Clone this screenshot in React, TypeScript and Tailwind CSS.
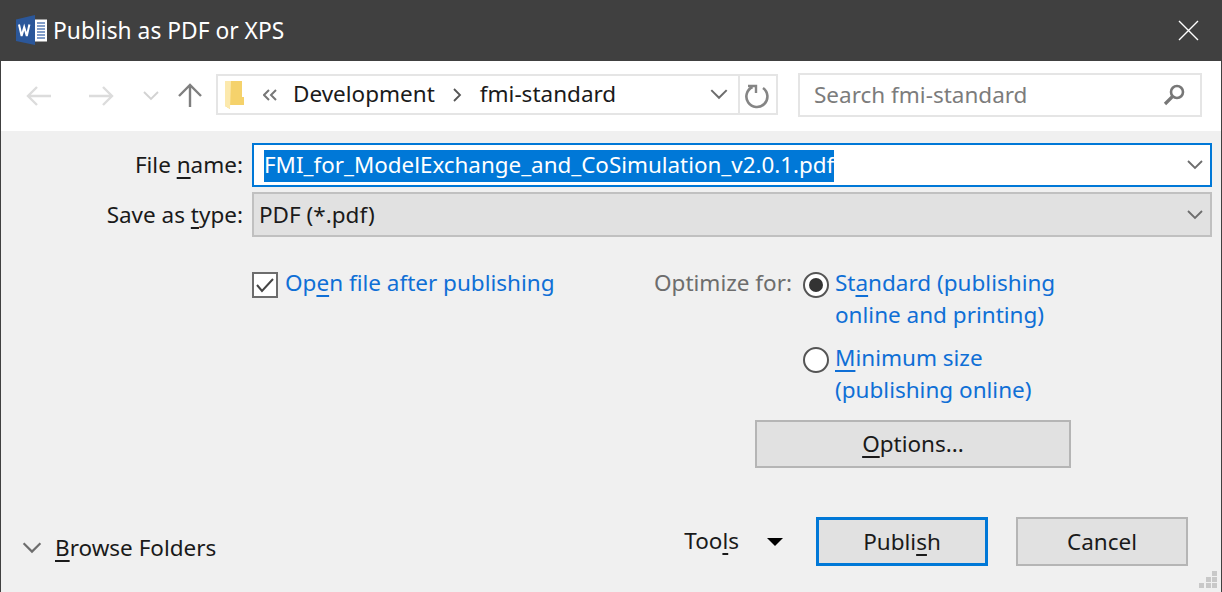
const font = { fontFamily: '"Noto Sans", sans-serif' };

const WordIcon = () => (
  <svg width="32" height="32" viewBox="0 0 32 32" className="shrink-0">
    <rect x="18" y="4.5" width="14" height="22" fill="#ffffff" />
    <path d="M22 8h8M22 11h8M22 14h8M22 17h8M22 20h8M22 23h8" stroke="#5b7fb8" strokeWidth="1.5" />
    <path d="M1 4.5 L20 0 V30 L1 26 Z" fill="#2b579a" />
    <path d="M4 9.5 L6.6 21 L9.2 12 L11.8 21 L14.4 9.5" fill="none" stroke="#ffffff" strokeWidth="2" />
  </svg>
);

const FolderIcon = () => (
  <svg width="20" height="28" viewBox="0 0 20 28">
    <path d="M0 0 H17 V16 H19 V24 H5 V28 L0 25 Z" fill="#f5d26b" />
    <path d="M0 0 H6 L5 28 L0 25 Z" fill="#fce9ad" />
  </svg>
);

const Arrow = ({ dir, color }: { dir: "left" | "right" | "up"; color: string }) => {
  const d =
    dir === "left"
      ? "M25 13H2M11 4l-9 9 9 9"
      : dir === "right"
        ? "M1 13h23M15 4l9 9-9 9"
        : "M13 24V2M2 13L13 2l11 11";
  return (
    <svg width="26" height="26" viewBox="0 0 26 26" fill="none" stroke={color} strokeWidth="2.4">
      <path d={d} />
    </svg>
  );
};

const Chevron = ({ className }: { className?: string }) => (
  <svg viewBox="0 0 16 10" fill="none" stroke="#6d6d6d" strokeWidth="1.8" className={className}>
    <path d="M1 1l7 7 7-7" />
  </svg>
);

export default function App() {
  return (
    <div
      className="w-[1222px] h-[592px] flex flex-col overflow-hidden bg-[#f0f0f0] text-[22.5px] text-[#1a1a1a] border-x border-[#404040]"
      style={font}
    >
      {/* title bar */}
      <div className="h-[61px] shrink-0 bg-[#404040] flex items-center pl-[14px] pr-[22px] text-white">
        <WordIcon />
        <span className="ml-[6px] mt-[2px] flex-1 leading-none text-[22.8px]">Publish as PDF or XPS</span>
        <svg width="21" height="21" viewBox="0 0 21 21" stroke="#ffffff" strokeWidth="1.4">
          <path d="M1 1l19 19M20 1L1 20" />
        </svg>
      </div>

      {/* nav toolbar */}
      <div className="h-[70px] shrink-0 bg-white flex items-center pl-[25px]">
        <Arrow dir="left" color="#dcdcdc" />
        <div className="w-[36px]" />
        <Arrow dir="right" color="#dcdcdc" />
        <Chevron className="ml-[29px] w-[16px] h-[10px] opacity-30" />
        <div className="ml-[18px]">
          <Arrow dir="up" color="#7f7f7f" />
        </div>
        <div className="ml-[13px] mb-[3px] w-[562px] h-[41px] border-2 border-[#e5e5e5] flex items-center bg-white">
          <div className="ml-[7px] flex items-center">
            <FolderIcon />
          </div>
          <svg width="14" height="12" viewBox="0 0 14 12" fill="none" stroke="#777" strokeWidth="2" className="ml-[18px] shrink-0">
            <path d="M6 1L1 6l5 5M13 1L8 6l5 5" />
          </svg>
          <span className="ml-[16px] mb-[2px]">Development</span>
          <svg width="10" height="16" viewBox="0 0 10 16" fill="none" stroke="#555" strokeWidth="1.8" className="ml-[18px] shrink-0">
            <path d="M1 2l6 6-6 6" />
          </svg>
          <span className="ml-[17px] mb-[2px] flex-1">fmi-standard</span>
          <Chevron className="mr-[10px] w-[18px] h-[11px]" />
          <div className="w-[2px] h-full bg-[#e5e5e5]" />
          <div className="w-[36px] flex items-center justify-center pt-[3px]">
            <svg width="26" height="26" viewBox="0 0 26 26" fill="none" stroke="#858585" strokeWidth="2.6">
              <path d="M18 5A10.5 10.5 0 1 1 7.5 4" />
              <path d="M3 3h8v7" strokeWidth="2.4" />
            </svg>
          </div>
        </div>
        <div className="ml-[20px] mb-[2px] w-[404px] h-[44px] border-2 border-[#e5e5e5] flex items-center pl-[14px] pr-[14px] bg-white">
          <span className="flex-1 text-[#7c7c7c]">Search fmi-standard</span>
          <svg width="24" height="24" viewBox="0 0 24 24" fill="none" stroke="#777" strokeWidth="2.6">
            <circle cx="15" cy="9" r="6" />
            <path d="M10.5 13.5L3 21" strokeWidth="3.2" />
          </svg>
        </div>
      </div>

      {/* form */}
      <div className="flex-1 flex flex-col pt-[12px] pr-[9px] relative">
        <div className="flex items-center h-[44px]">
          <div className="w-[251px] pr-[9px] text-right">
            File <u className="underline-offset-4">n</u>ame:
          </div>
          <div className="flex-1 h-full border-2 border-[#0078d7] bg-white flex items-center pl-[10px] pr-[7px]">
            <span className="flex-1">
              <span className="bg-[#0078d7] text-white inline-block h-[32px] leading-[30px] text-[22.4px]">
                FMI_for_ModelExchange_and_CoSimulation_v2.0.1.pdf
              </span>
            </span>
            <Chevron className="w-[16px] h-[10px]" />
          </div>
        </div>
        <div className="flex items-center h-[45px] mt-[5px]">
          <div className="w-[251px] pr-[9px] text-right">
            Save as <u className="underline-offset-4">t</u>ype:
          </div>
          <div className="flex-1 h-full border-2 border-[#c0c0c0] bg-[#e1e1e1] flex items-center pl-[5px] pr-[7px]">
            <span className="flex-1">PDF (*.pdf)</span>
            <Chevron className="w-[16px] h-[10px]" />
          </div>
        </div>

        <div className="flex mt-[33px] pl-[251px]">
          <div className="w-[402px] flex items-start h-[28px]">
            <div className="w-[26px] h-[26px] mt-[2px] border-2 border-[#6d6d6d] bg-white flex items-center justify-center">
              <svg width="20" height="16" viewBox="0 0 20 16" fill="none" stroke="#444" strokeWidth="2">
                <path d="M2 8l5 6L18 2" />
              </svg>
            </div>
            <span className="ml-[7px] text-[#0f6fd6] leading-[26px]">
              Op<u className="underline-offset-4">e</u>n file after publishing
            </span>
          </div>
          <div className="flex flex-col">
            <div className="flex items-start">
              <span className="text-[#6d6d6d] leading-[26px] w-[149px]">Optimize for:</span>
              <div className="mt-[2px] w-[26px] h-[26px] rounded-full border-2 border-[#555] bg-white flex items-center justify-center">
                <div className="w-[14px] h-[14px] rounded-full bg-[#333]" />
              </div>
              <span className="ml-[6px] text-[#0f6fd6] leading-[32px] -mt-[3px]">
                St<u className="underline-offset-4">a</u>ndard (publishing
                <br />
                online and printing)
              </span>
            </div>
            <div className="flex items-start mt-[14px] pl-[149px]">
              <div className="mt-[2px] w-[26px] h-[26px] rounded-full border-2 border-[#555] bg-white" />
              <span className="ml-[6px] text-[#0f6fd6] leading-[32px] -mt-[3px]">
                <u className="underline-offset-4">M</u>inimum size
                <br />
                (publishing online)
              </span>
            </div>
            <button className="ml-[101px] mt-[14px] w-[316px] h-[48px] border-2 border-[#b5b5b5] bg-[#e1e1e1] text-center">
              <u className="underline-offset-4">O</u>ptions...
            </button>
          </div>
        </div>

        <div className="flex items-center mt-[49px]">
          <div className="flex items-center pl-[21px] pt-[13px] flex-1">
            <Chevron className="w-[20px] h-[12px]" />
            <span className="ml-[13px]">
              <u className="underline-offset-4">B</u>rowse Folders
            </span>
          </div>
          <span className="leading-none">
            Too<u className="underline-offset-4">l</u>s
          </span>
          <div className="ml-[28px] mr-[33px] w-0 h-0 border-x-[8px] border-x-transparent border-t-[8px] border-t-black" />
          <button className="w-[172px] h-[49px] border-[3px] border-[#0078d7] bg-[#e1e1e1]">
            Publi<u className="underline-offset-4">s</u>h
          </button>
          <button className="ml-[28px] mr-[24px] w-[172px] h-[49px] border-2 border-[#b5b5b5] bg-[#e1e1e1]">
            Cancel
          </button>
        </div>

        {/* resize grip */}
        <svg width="20" height="20" viewBox="0 0 20 20" fill="#c8c8c8" className="absolute right-[3px] bottom-[2px]">
          <rect x="14" y="1" width="5" height="5" />
          <rect x="8" y="7" width="5" height="5" />
          <rect x="14" y="7" width="5" height="5" />
          <rect x="1" y="13" width="5" height="5" />
          <rect x="8" y="13" width="5" height="5" />
          <rect x="14" y="13" width="5" height="5" />
        </svg>
      </div>
    </div>
  );
}
